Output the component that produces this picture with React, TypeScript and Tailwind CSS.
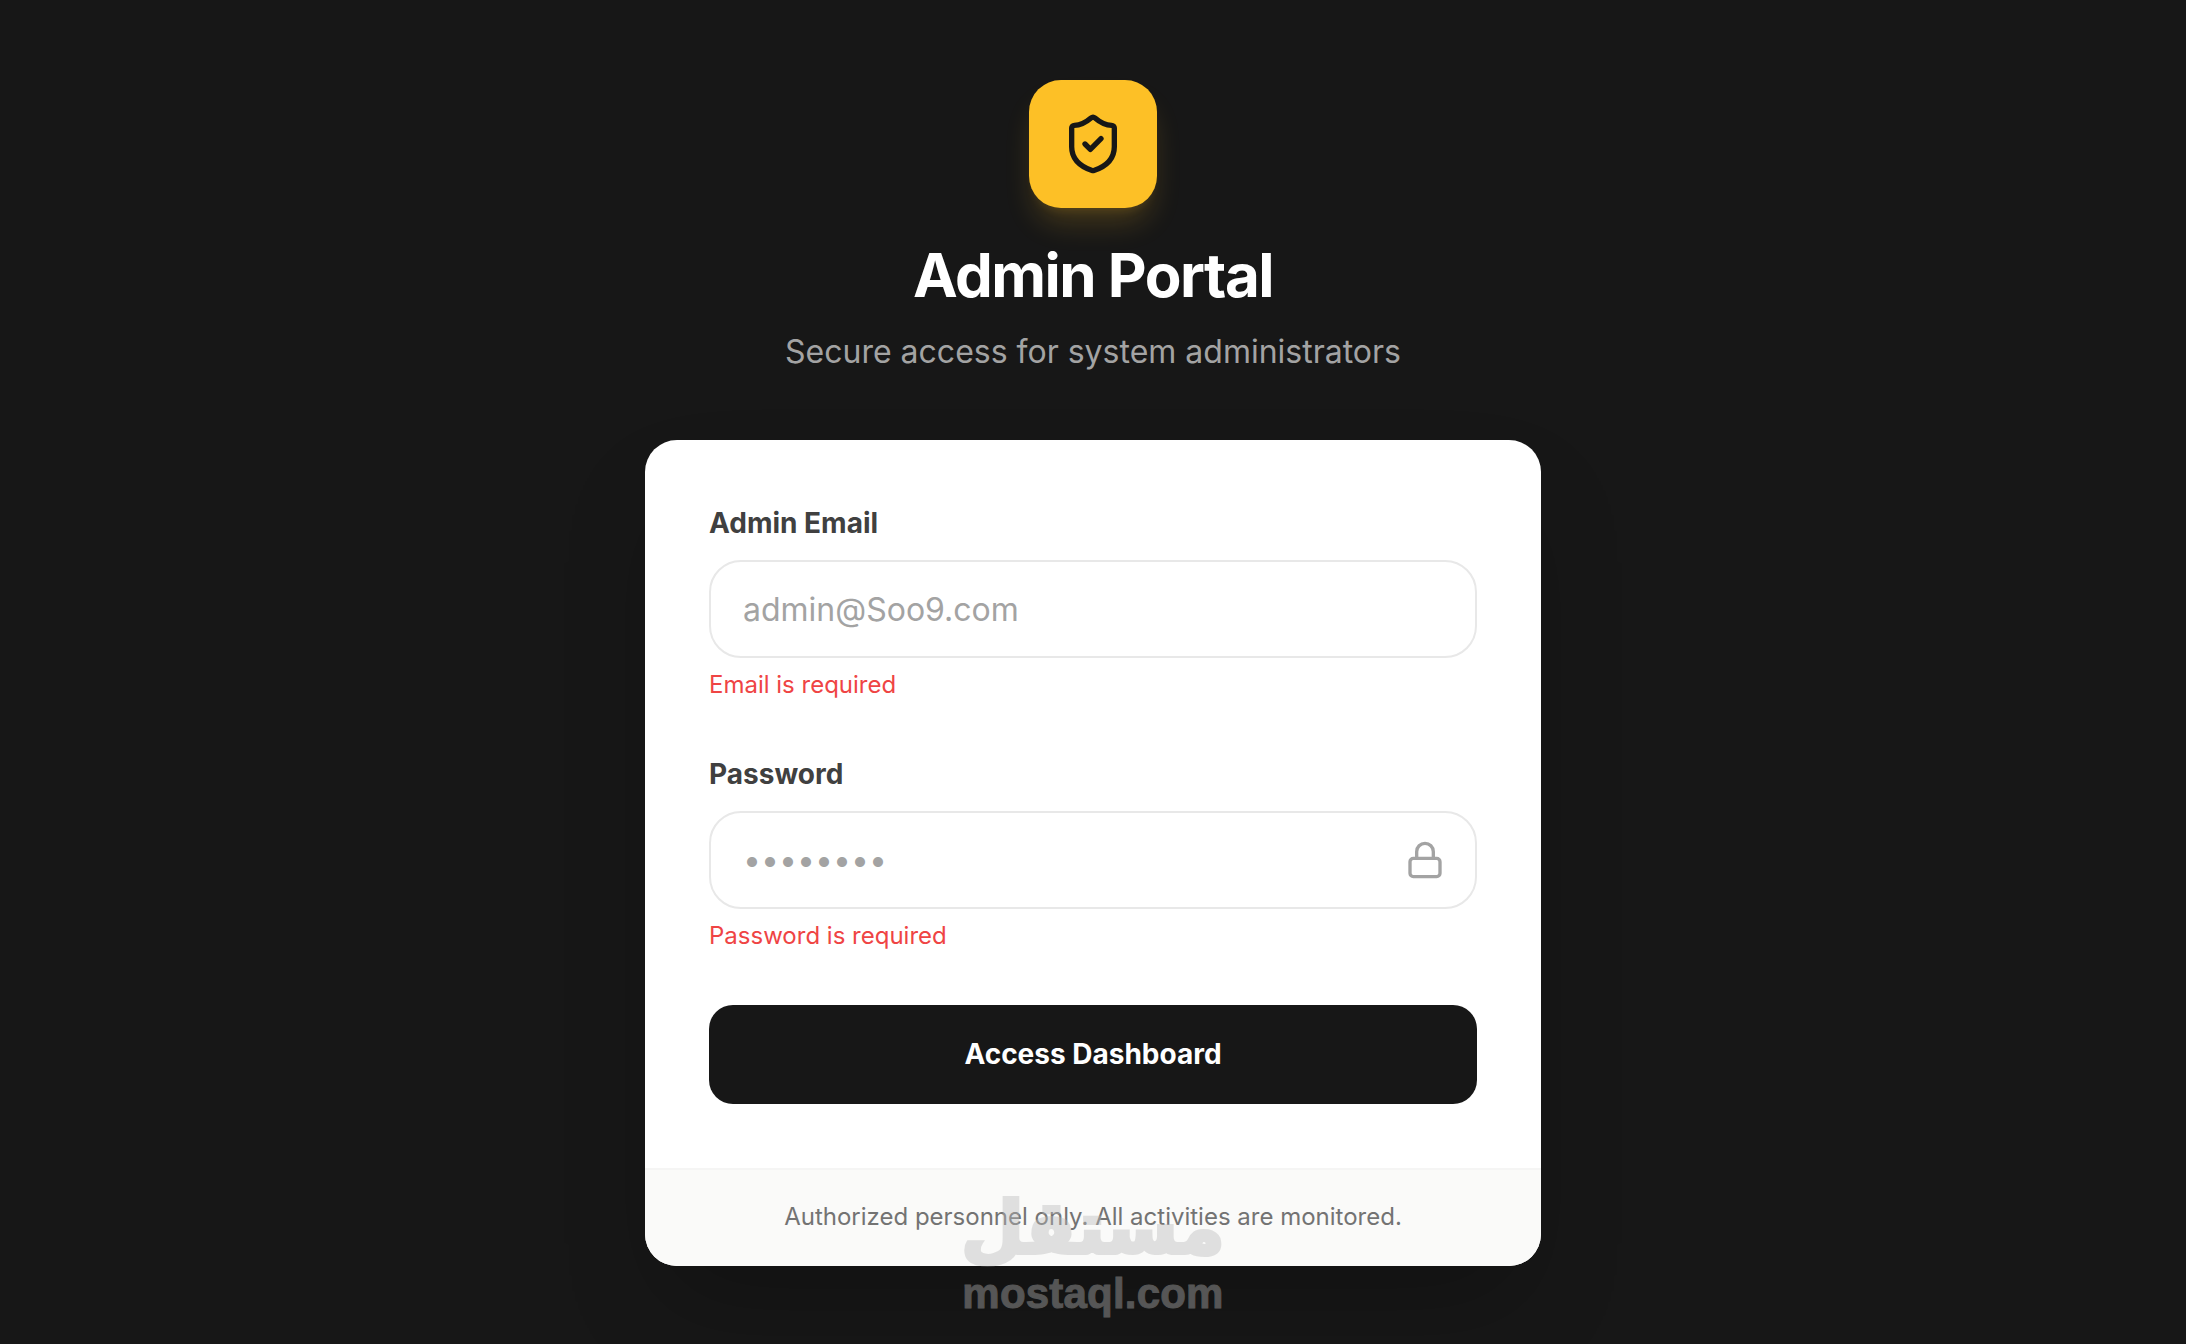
import { Lock, ShieldCheck } from "lucide-react";

const inter = "font-['Inter','Noto_Sans',sans-serif]";

export default function App() {
  return (
    <div className={`relative flex min-h-screen flex-col items-center justify-center bg-[#171717] pt-[80px] pb-[78px] ${inter}`}>
      <div className="mb-[64px] flex flex-col items-center">
        <div className="mb-[31px] flex h-[128px] w-[128px] items-center justify-center rounded-[32px] bg-[#fdc026] shadow-[0_20px_30px_-6px_rgba(253,192,38,0.2),0_8px_12px_-8px_rgba(253,192,38,0.2)]">
          <ShieldCheck size={64} strokeWidth={2} className="text-[#171717]" />
        </div>
        <h1 className="mb-[17px] text-[60px] leading-[72px] font-bold tracking-[-1.5px] text-white">Admin Portal</h1>
        <p className="text-[32px] leading-[48px] text-[#a3a3a3]">Secure access for system administrators</p>
      </div>

      <div className="w-[896px] overflow-hidden rounded-[32px] bg-white shadow-[0_50px_100px_-24px_rgba(0,0,0,0.25)]">
        <form className="flex flex-col p-[64px]">
          <label className="mb-[18px] text-[28px] leading-[38px] font-bold text-[#404040]">Admin Email</label>
          <input
            type="email"
            placeholder="admin@Soo9.com"
            className="h-[98px] w-full rounded-[32px] border-2 border-[#e8e8e8] bg-white px-[32px] text-[32px] outline-none placeholder:text-[#a3a3a3]"
          />
          <p className="mt-[7px] text-[24px] leading-[40px] text-[#ef4444]">Email is required</p>

          <label className="mt-[50px] mb-[18px] text-[28px] leading-[38px] font-bold text-[#404040]">Password</label>
          <div className="relative">
            <input
              type="password"
              placeholder="••••••••"
              className="h-[98px] w-full rounded-[32px] border-2 border-[#e8e8e8] bg-white px-[32px] pb-[1px] text-[32px] outline-none placeholder:text-[#a3a3a3]"
            />
            <Lock size={40} strokeWidth={2} className="absolute top-1/2 right-[32px] -translate-y-1/2 text-[#a3a3a3]" />
          </div>
          <p className="mt-[7px] text-[24px] leading-[40px] text-[#ef4444]">Password is required</p>

          <button type="button" className="mt-[49px] h-[99px] w-full rounded-[24px] bg-[#171717] pb-[2px] text-[28px] font-bold text-white">
            Access Dashboard
          </button>
        </form>
        <div className="flex h-[98px] items-center justify-center border-t-2 border-[#f5f5f4] bg-[#fafaf9] pb-[2px] text-[24px] text-[#737373]">
          Authorized personnel only. All activities are monitored.
        </div>
      </div>

      <div className="pointer-events-none absolute top-[1186px] left-1/2 flex -translate-x-1/2 flex-col items-center opacity-40">
        <span dir="rtl" className="font-['DejaVu_Sans',sans-serif] text-[72px] leading-[84px] font-bold text-[#b9b9b9] [-webkit-text-stroke:4px_#b9b9b9]">مستقل</span>
        <span className="font-['Liberation_Sans',sans-serif] text-[42px] leading-[48px] font-bold tracking-[0.2px] text-[#b9b9b9] [-webkit-text-stroke:1px_#b9b9b9]">mostaql.com</span>
      </div>
    </div>
  );
}
